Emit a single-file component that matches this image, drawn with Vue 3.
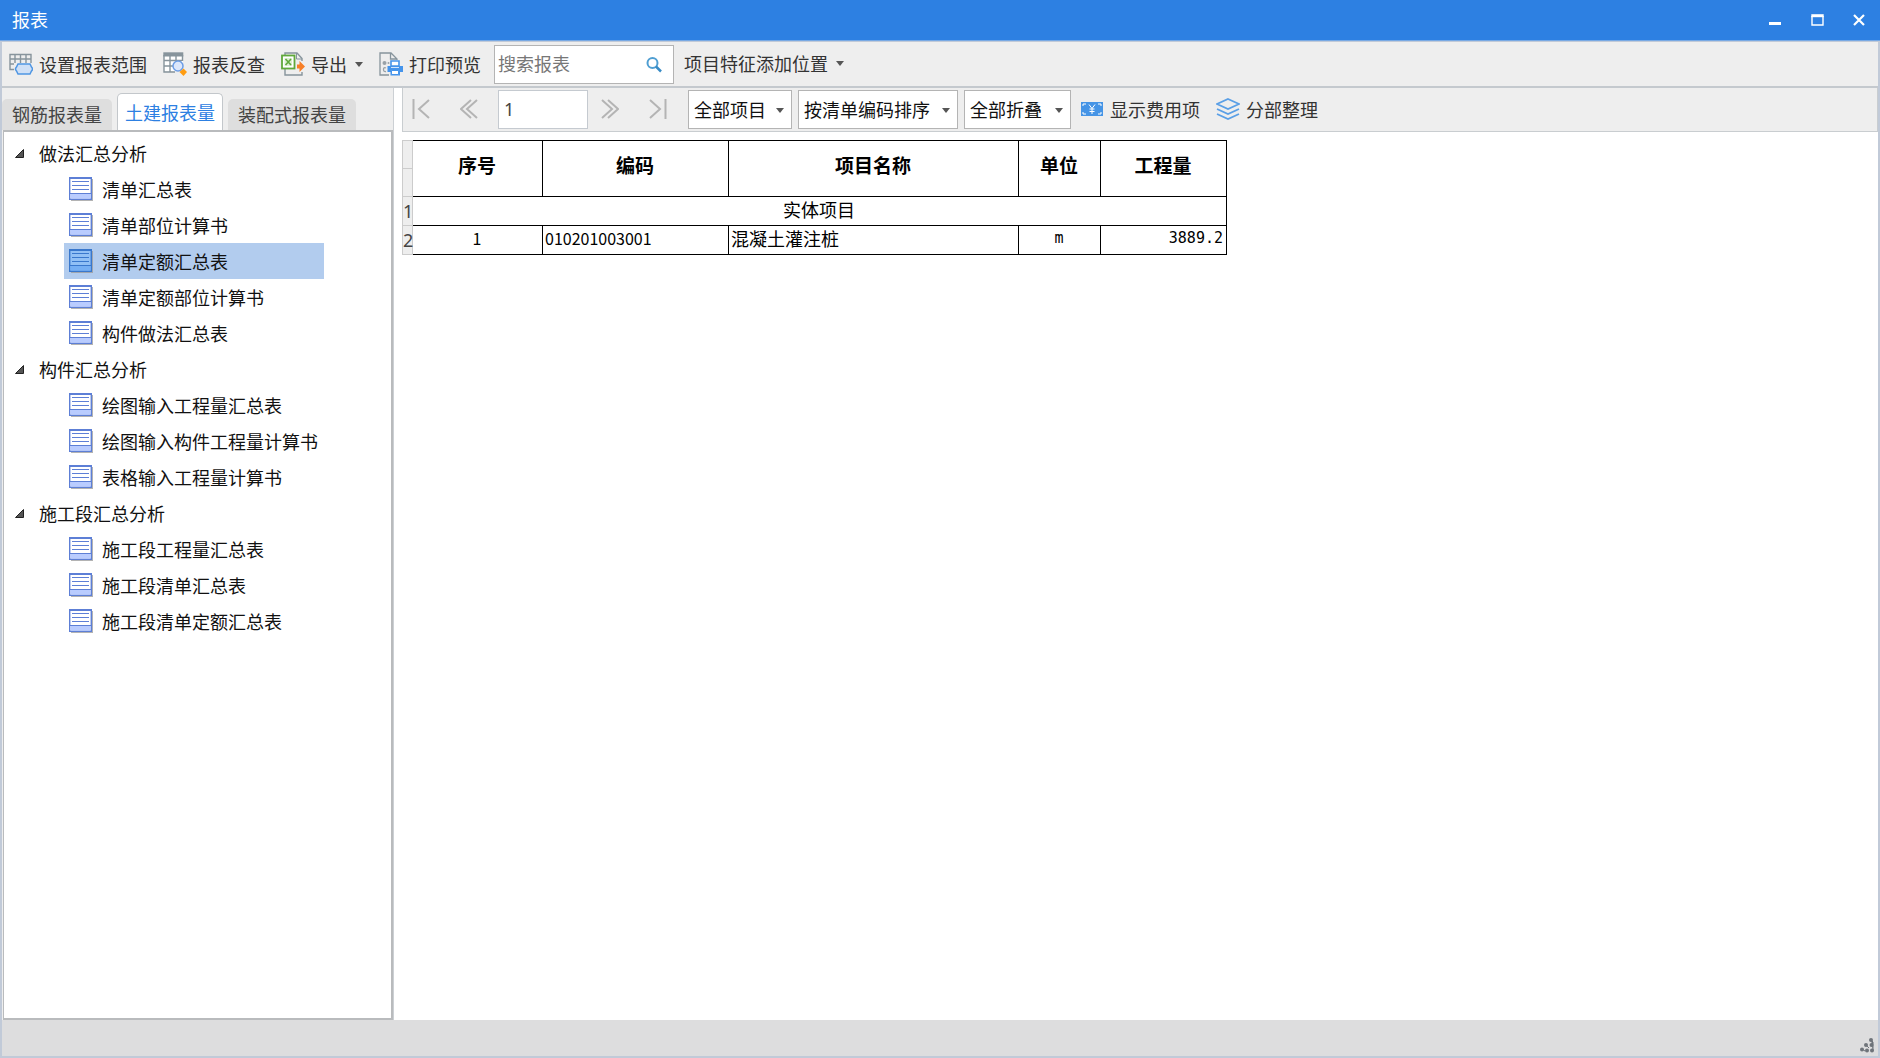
<script setup>
import { ref } from 'vue'

const keyword = ref('')
const page = ref('1')
const activeTab = ref('土建报表量')
const selected = ref('清单定额汇总表')

const tabs = ['钢筋报表量', '土建报表量', '装配式报表量']
const groups = [
  { name: '做法汇总分析', items: ['清单汇总表', '清单部位计算书', '清单定额汇总表', '清单定额部位计算书', '构件做法汇总表'] },
  { name: '构件汇总分析', items: ['绘图输入工程量汇总表', '绘图输入构件工程量计算书', '表格输入工程量计算书'] },
  { name: '施工段汇总分析', items: ['施工段工程量汇总表', '施工段清单汇总表', '施工段清单定额汇总表'] }
]
</script>

<template>
  <div class="window">
    <header class="titlebar">
      <h1>报表</h1>
      <div class="controls">
        <button aria-label="最小化"><svg width="12" height="12"><path d="M0 9.5h12" stroke="#fff" stroke-width="3" /></svg></button>
        <button aria-label="最大化"><svg width="13" height="12"><path d="M1 2v9h11V2" fill="none" stroke="#fff" stroke-width="1.4" /><path d="M.3 1.7h12.4" stroke="#fff" stroke-width="3" /></svg></button>
        <button aria-label="关闭"><svg width="12" height="12"><path d="M1 1l10 10M11 1L1 11" stroke="#fff" stroke-width="2.2" /></svg></button>
      </div>
    </header>

    <div class="frame">
      <nav class="toolbar" aria-label="工具栏">
        <button class="tool">
          <svg width="24" height="24" viewBox="0 0 24 24" fill="none">
            <path d="M1 2.500h21v15H1zM1 7h21M1 12h21M6 2.500v15M11.500 2.500v15M17 2.500v15" stroke="#87949c" stroke-width="1.4" />
            <path d="M5 11h19v12H5z" fill="#eee" />
            <path d="M9 12h12l1.500 3q2 2 0 4L21 22H9l-1.500-3q-2-2 0-4z" fill="#cfe0f6" stroke="#4f96e3" stroke-width="1.500" />
          </svg>
          设置报表范围
        </button>
        <button class="tool">
          <svg width="24" height="24" viewBox="0 0 24 24" fill="none">
            <path d="M1 1h19v18H1z" fill="#fff" />
            <path d="M1 3v17h11M1 8.5h18M1 14h9M7 4v16M13 4v6M19.5 3v6" stroke="#87949c" stroke-width="1.4" />
            <path d="M.3.3h20V4.500H.3z" fill="#87949c" />
            <circle cx="15" cy="14" r="5" fill="#dce7fb" stroke="#6c9de5" stroke-width="1.5" />
            <path d="M20.500 16.500l3.500 3.500-3.500 4-4-4z" fill="#ff9d12" />
          </svg>
          报表反查
        </button>
        <button class="tool">
          <svg width="24" height="24" viewBox="0 0 24 24" fill="none">
            <path d="M4 3V1h12l5 5.500V9M4 17v6h17v-3" stroke="#87949c" stroke-width="1.400" />
            <path d="M15.500 1v6H21" stroke="#87949c" />
            <rect x="1" y="3.500" width="12.500" height="13" fill="#fff" stroke="#5fa83b" stroke-width="1.800" />
            <rect x="3.500" y="6" width="7.500" height="8" fill="#dcefd2" />
            <path d="M4.500 7l5.500 6M10 7l-5.500 6" stroke="#5fa83b" stroke-width="1.600" />
            <path d="M16 12.500h2.500V9l5.500 5.500-5.500 5.500v-3.500H16z" fill="#f77f27" />
          </svg>
          导出
          <svg class="caret" width="8" height="5"><path d="M0 0h8L4 5z" fill="#555" /></svg>
        </button>
        <button class="tool">
          <svg width="24" height="24" viewBox="0 0 24 24" fill="none">
            <path d="M18 8V7l-6-6H1v22h9M11.500 1v6H18" stroke="#87949c" stroke-width="1.300" />
            <circle cx="5.500" cy="11" r="2" fill="#99a2a8" /><circle cx="9.500" cy="11" r="1" fill="#99a2a8" />
            <path d="M7 16Q4.500 15 4.500 17.500T7 19.500" stroke="#99a2a8" stroke-width="1.300" />
            <path d="M8.500 14H24v6h-3v3.500h-9.500V20h-3z" fill="#4594eb" />
            <path d="M12 9h8v5h-8z" fill="#fff" stroke="#4594eb" stroke-width="1.600" />
            <path d="M12.500 18.500h7v4h-7z" fill="#fff" stroke="#4594eb" />
            <path d="M12 15.500h8" stroke="#d3e5fb" />
          </svg>
          打印预览
        </button>
        <div class="search">
          <input v-model="keyword" type="text" aria-label="搜索报表" placeholder="搜索报表" />
          <svg width="16" height="16" fill="none"><circle cx="6.500" cy="6" r="5" stroke="#4f9ed2" stroke-width="2" /><path d="M10 9.500l5 5" stroke="#378bc5" stroke-width="2.500" /></svg>
        </div>
        <button class="tool menu">
          项目特征添加位置
          <svg class="caret" width="8" height="5"><path d="M0 0h8L4 5z" fill="#555" /></svg>
        </button>
      </nav>

      <div class="body">
        <aside class="side">
          <div class="tabs" role="tablist">
            <button v-for="t in tabs" :key="t" role="tab" :aria-selected="t === activeTab" :class="{ active: t === activeTab }" @click="activeTab = t">{{ t }}</button>
          </div>
          <div class="tree">
            <section v-for="g in groups" :key="g.name">
              <h2>
                <svg width="9" height="9"><path d="M8.500.5v8H.5z" fill="#555" stroke="#222" /></svg>
                {{ g.name }}
              </h2>
              <ul>
                <li v-for="item in g.items" :key="item">
                  <button :class="{ selected: item === selected }" @click="selected = item">
                    <svg width="24" height="24" viewBox="0 0 24 24">
                      <path d="M2 2h22v22H2z" fill="#999" opacity=".75" />
                      <path class="sheet" d="M.7.7h21.600v21.600H.7z" stroke-width="1.400" />
                      <path class="foot" d="M1.400 16.500h20.200v5.100H1.400z" />
                      <path class="rule" d="M1 1.500h21M3 4.500h17M3 8.500h17M3 12.500h17M1 16.500h21" stroke-width="1.200" />
                    </svg>
                    {{ item }}
                  </button>
                </li>
              </ul>
            </section>
          </div>
        </aside>

        <main class="report">
          <div class="pager">
            <div class="nav">
              <button aria-label="首页"><svg width="18" height="20"><path d="M1.500 0v20M17 1L7 10l10 9" /></svg></button>
              <button aria-label="上一页"><svg width="18" height="20"><path d="M11 1L1 10l10 9M17 1L7 10l10 9" /></svg></button>
              <input v-model="page" type="text" aria-label="页码" />
              <button aria-label="下一页"><svg width="18" height="20"><path d="M1 1l10 9-10 9M7 1l10 9-10 9" /></svg></button>
              <button aria-label="末页"><svg width="18" height="20"><path d="M16.500 0v20M1 1l10 9-10 9" /></svg></button>
            </div>
            <div class="select scope">
              <select aria-label="项目范围"><option>全部项目</option></select>
              <svg width="8" height="5"><path d="M0 0h8L4 5z" fill="#555" /></svg>
            </div>
            <div class="select order">
              <select aria-label="排序方式"><option>按清单编码排序</option></select>
              <svg width="8" height="5"><path d="M0 0h8L4 5z" fill="#555" /></svg>
            </div>
            <div class="select fold">
              <select aria-label="折叠方式"><option>全部折叠</option></select>
              <svg width="8" height="5"><path d="M0 0h8L4 5z" fill="#555" /></svg>
            </div>
            <button class="tool fee">
              <svg width="24" height="24" viewBox="0 0 24 24" fill="none">
                <path d="M1 5h22v14H1z" fill="#4594e6" />
                <path d="M3 9V7h3M18 7h3v2M3 15v2h3M18 17h3v-2M9 7.500l3 4 3-4M12 11.500V17M9.500 12h5M9.500 14.500h5" stroke="#fff" stroke-width="1" />
              </svg>
              显示费用项
            </button>
            <button class="tool">
              <svg width="24" height="24" viewBox="0 0 24 24" fill="none" stroke="#5a9fe6" stroke-width="1.900">
                <path d="M12 2l11 5-11 5L1 7zM1 12l11 5 11-5M1 17l11 5 11-5" />
              </svg>
              分部整理
            </button>
          </div>

          <table>
            <colgroup><col class="c-row" /><col class="c-no" /><col class="c-code" /><col class="c-name" /><col class="c-unit" /><col class="c-qty" /></colgroup>
            <thead>
              <tr>
                <td class="row-head"><i></i></td>
                <th scope="col">序号</th><th scope="col">编码</th><th scope="col">项目名称</th><th scope="col">单位</th><th scope="col">工程量</th>
              </tr>
            </thead>
            <tbody>
              <tr>
                <th class="row-head" scope="row">1</th>
                <td class="center" colspan="5">实体项目</td>
              </tr>
              <tr>
                <th class="row-head" scope="row">2</th>
                <td class="center num">1</td>
                <td class="num">010201003001</td>
                <td>混凝土灌注桩</td>
                <td class="center mono">m</td>
                <td class="right mono">3889.2</td>
              </tr>
            </tbody>
          </table>
        </main>
      </div>

      <footer class="status">
        <svg width="15" height="15" fill="#6f747a"><circle cx="11" cy="2" r="2" /><circle cx="6" cy="7" r="2" /><circle cx="11.500" cy="7" r="2" /><circle cx="2" cy="11.500" r="2" /><circle cx="7" cy="12.500" r="2" /><circle cx="12" cy="12.500" r="2" /><path d="M11 2l2 2v9M6 7l3 3M2 11l3 2" stroke="#6f747a" /></svg>
      </footer>
    </div>
  </div>
</template>

<style>
html, body, #app { height: 100%; }
body { margin: 0; }
</style>

<style scoped>
* { box-sizing: border-box; }
.window {
  display: flex;
  flex-direction: column;
  min-height: 100%;
  font: 18px/24px "Noto Sans CJK SC", sans-serif;
  color: #111;
  background: #eee;
}
button, input, select { font: inherit; color: inherit; margin: 0; padding: 0; border: 0; background: none; border-radius: 0; outline: 0; }
button { white-space: nowrap; }
h1, h2, ul { margin: 0; padding: 0; font: inherit; list-style: none; }
svg { display: block; flex: none; }

.titlebar {
  display: flex;
  justify-content: space-between;
  align-items: center;
  height: 41px;
  padding-left: 12px;
  color: #fff;
  background: #2d80e2;
  border-bottom: 1px solid #78a9e4;
}
.titlebar h1 { padding-bottom: 2px; }
.controls { display: flex; }
.controls button { display: flex; justify-content: center; align-items: center; width: 42px; height: 40px; }

.frame { flex: 1; display: flex; flex-direction: column; border: solid #c1cad8; border-width: 1px 2px 2px; }
.toolbar {
  display: flex;
  align-items: center;
  height: 46px;
  padding-left: 7px;
  color: #333;
  background: #eee;
  border-bottom: 2px solid #c4c9ce;
}
.tool { display: flex; align-items: center; gap: 6px; margin-right: 16px; color: #333; }
.tool .caret { margin-left: 2px; }
.search { position: relative; width: 180px; margin: 0 10px 0 -3px; }
.search input { display: block; width: 100%; height: 39px; padding: 0 36px 2px 3px; background: #fff; border: 1px solid #b4b4b4; }
.search input::placeholder { color: #777; opacity: 1; }
.search svg { position: absolute; top: 12px; right: 12px; }
.menu { padding-bottom: 2px; }

.body { flex: 1; display: flex; background: #fff; }
.side { display: flex; flex-direction: column; width: 392px; background: #eee; border-right: 1px solid #ccd0d4; }
.tabs { display: flex; align-items: flex-end; gap: 5px; height: 42px; }
.tabs button { height: 31px; padding: 0 10px 2px; color: #444; background: #dedede; border-radius: 5px 5px 0 0; }
.tabs .active { height: 37px; padding: 0 7px; color: #2d80e2; background: #fff; border: 1px solid #c3c7cb; border-bottom: 0; }
.tree { flex: 1; margin-left: 1px; padding-top: 3px; background: #fff; border: 2px solid #b9bbbd; border-left-width: 1px; }
.tree h2 { display: flex; align-items: center; gap: 15px; height: 36px; padding-left: 11px; }
.tree li { height: 36px; padding-left: 60px; }
.tree li button { display: flex; align-items: center; gap: 9px; width: 260px; height: 36px; padding-left: 5px; }
.sheet { fill: #fff; stroke: #5d7fd6; }
.foot { fill: #b9ccff; }
.rule { stroke: #5d7fd6; }
.selected { background: #b2ccee; }
.selected .sheet { fill: #91c0f5; stroke: #3978cd; }
.selected .foot { fill: #75aff4; }
.selected .rule { stroke: #3978cd; }

.report { flex: 1; min-width: 0; padding-left: 8px; }
.pager {
  display: flex;
  align-items: center;
  height: 44px;
  padding: 0 0 1px 9px;
  background: #eee;
  border: 1px solid #c9cdd0;
  border-top: 0;
}
.nav { display: flex; align-items: center; gap: 30px; margin-right: 21px; }
.nav path { fill: none; stroke: #b4b4b4; stroke-width: 2; }
.nav input { width: 90px; height: 39px; margin: 0 -17px 0 -10px; padding-left: 5px; font-family: "Noto Sans", sans-serif; background: #fff; border: 1px solid #c5cad0; color: #444; }
.select { position: relative; margin-right: 6px; }
.select select { display: block; width: 100%; height: 39px; padding-left: 5px; appearance: none; background: #fff; border: 1px solid #b4b4b4; }
.select svg { position: absolute; top: 18px; right: 8px; pointer-events: none; }
.scope { width: 104px; }
.order { width: 160px; }
.fold { width: 107px; }
.fee { margin-left: 3px; }

table { width: 825px; margin-top: 8px; table-layout: fixed; border-collapse: collapse; color: #000; }
.c-row { width: 10px; }
.c-no { width: 130px; }
.c-code { width: 186px; }
.c-name { width: 290px; }
.c-unit { width: 82px; }
.c-qty { width: 126px; }
th, td { height: 29px; padding: 0 3px 4px 2px; border: 1px solid #000; line-height: 24px; white-space: nowrap; text-align: left; }
thead th { height: 56px; padding-bottom: 8px; font-size: 19px; font-weight: 700; text-align: center; }
.row-head { padding: 0; font: 18px/24px "Noto Sans", sans-serif; color: #444; background: #eee; border-color: #ccc; text-align: center; }
.row-head i { display: block; height: 1px; background: #ccc; }
.center { text-align: center; }
.right { text-align: right; }
.num { font-size: 16px; }
.mono { font: 15px/24px "DejaVu Sans Mono", monospace; }

.status { display: flex; justify-content: flex-end; align-items: flex-end; height: 36px; padding: 0 3px 3px; background: #ddddde; }
</style>
